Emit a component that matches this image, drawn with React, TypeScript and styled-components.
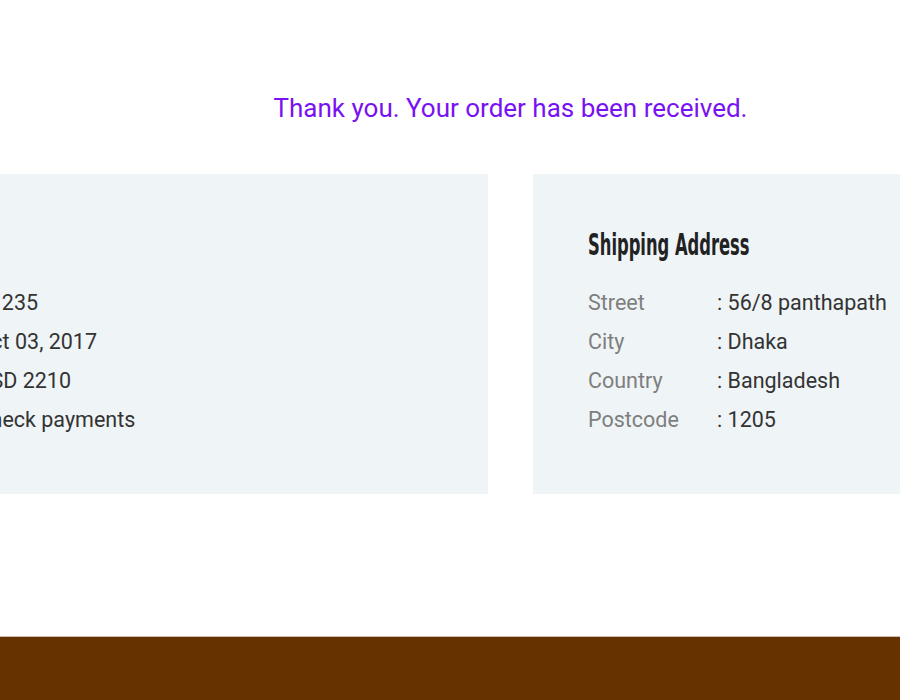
import React from "react";
import styled, { createGlobalStyle } from "styled-components";

const GlobalStyle = createGlobalStyle`
  html, body {
    margin: 0;
    padding: 0;
    overflow-x: hidden;
    background: #ffffff;
  }
  body {
    font-family: Roboto, "Liberation Sans", Arial, sans-serif;
  }
`;

const Page = styled.div`
  width: 1021px;
  display: flex;
  flex-direction: column;
`;

const Main = styled.main`
  display: flex;
  flex-direction: column;
  align-items: center;
  padding: 92px 0 142px;
`;

const Title = styled.h2`
  margin: 0 0 50px;
  font-family: Roboto, "Liberation Sans", Arial, sans-serif;
  font-weight: 400;
  font-size: 26px;
  line-height: 32px;
  color: #7812f2;
  text-align: center;
  white-space: nowrap;
`;

const CardRow = styled.div`
  display: flex;
  justify-content: center;
  gap: 45px;
  width: 100%;
`;

const Card = styled.section`
  flex: 0 0 706px;
  box-sizing: border-box;
  height: 320px;
  padding: 56px 55px 55px;
  background: #eff4f7;
`;

const CardTitle = styled.h3`
  margin: 0 0 23px;
  height: 30px;
  font-family: "DejaVu Sans Condensed", "DejaVu Sans", sans-serif;
  font-stretch: condensed;
  font-weight: 700;
  font-size: 30px;
  line-height: 30px;
  color: #222222;
  white-space: nowrap;
`;

const CardTitleText = styled.span`
  display: inline-block;
  transform: scaleX(0.605);
  transform-origin: left center;
`;

const InfoList = styled.dl`
  margin: 0;
  display: grid;
  grid-template-columns: 129px 1fr;
  grid-auto-rows: 39px;
  font-size: 21.5px;
  line-height: 39px;
`;

const Label = styled.dt`
  margin: 0;
  color: #7e7e7e;
  white-space: nowrap;
`;

const Value = styled.dd`
  margin: 0;
  color: #333333;
  white-space: nowrap;
`;

const Footer = styled.footer`
  height: 64px;
  border-top: 1px solid #cdbfb0;
  background: #663300;
`;

type Row = { label: string; value: string };

const orderRows: Row[] = [
  { label: "Order No", value: "#1235" },
  { label: "Date", value: "Oct 03, 2017" },
  { label: "Total", value: "USD 2210" },
  { label: "Payment", value: "Check payments" },
];

const shippingRows: Row[] = [
  { label: "Street", value: "56/8 panthapath" },
  { label: "City", value: "Dhaka" },
  { label: "Country", value: "Bangladesh" },
  { label: "Postcode", value: "1205" },
];

function InfoCard({ title, rows }: { title: string; rows: Row[] }) {
  return (
    <Card>
      <CardTitle>
        <CardTitleText>{title}</CardTitleText>
      </CardTitle>
      <InfoList>
        {rows.map((r) => (
          <React.Fragment key={r.label}>
            <Label>{r.label}</Label>
            <Value>: {r.value}</Value>
          </React.Fragment>
        ))}
      </InfoList>
    </Card>
  );
}

export default function App() {
  return (
    <>
      <GlobalStyle />
      <Page>
        <Main>
          <Title>Thank you. Your order has been received.</Title>
          <CardRow>
            <InfoCard title="Order Details" rows={orderRows} />
            <InfoCard title="Shipping Address" rows={shippingRows} />
          </CardRow>
        </Main>
        <Footer />
      </Page>
    </>
  );
}
